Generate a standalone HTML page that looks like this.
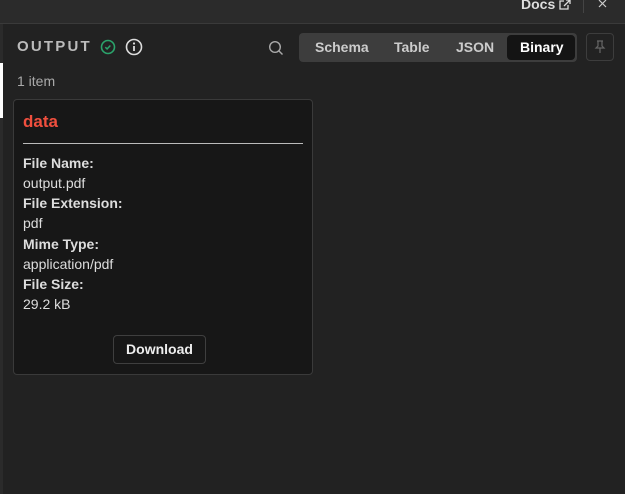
<!DOCTYPE html>
<html><head><style>
body{margin:0;width:625px;height:494px;background:#222;font-family:"Liberation Sans",Arial,sans-serif;position:relative;overflow:hidden;color:#ddd}
.top{position:absolute;left:0;top:0;width:625px;height:23px;background:#2b2b2b;border-bottom:1px solid #3a3a3a}
.abs{position:absolute}
.card{position:absolute;left:13px;top:99px;width:298px;height:274px;background:#171717;border:1px solid #3a3a3a;border-radius:4px}
.lbl{font-weight:bold;font-size:14px;color:#ddd}
.val{font-size:14px;color:#ddd}
</style></head><body>
<div class="top"></div>
<div class="abs" style="left:521px;top:-4px;font-size:14px;font-weight:bold;color:#ddd">Docs</div>
<svg class="abs" style="left:558px;top:0" width="13" height="10" viewBox="0 0 13 10"><path d="M6 1H2v8h8V5M8 0h4v4M12 0L6 6" stroke="#ddd" stroke-width="1.3" fill="none"/></svg>
<div class="abs" style="left:583px;top:0;width:1px;height:13px;background:#444"></div>
<svg class="abs" style="left:598px;top:0" width="10" height="8"><path d="M1 0l7 7M8 0L1 7" stroke="#ccc" stroke-width="1.2"/></svg>
<div class="abs" style="left:0;top:24px;width:3px;height:470px;background:#2b2b2b"></div>
<div class="abs" style="left:0;top:63px;width:3px;height:55px;background:#fff"></div>
<div class="abs" style="left:17px;top:38px;font-size:15px;font-weight:bold;letter-spacing:2.2px;color:#bbb">OUTPUT</div>
<svg class="abs" style="left:100px;top:39px" width="16" height="16"><circle cx="8" cy="8" r="6.5" stroke="#2ba36b" stroke-width="1.6" fill="none"/><path d="M5.3 8.2l1.8 1.7 3.3-3.4" stroke="#2ba36b" stroke-width="1.5" fill="none"/></svg>
<svg class="abs" style="left:125px;top:38px" width="18" height="18"><circle cx="9" cy="9" r="7.5" stroke="#ddd" stroke-width="1.6" fill="none"/><path d="M9 8v5" stroke="#ddd" stroke-width="1.8"/><circle cx="9" cy="5.5" r="1.1" fill="#ddd"/></svg>
<svg class="abs" style="left:268px;top:40px" width="16" height="16"><circle cx="7" cy="7" r="5.3" stroke="#aaa" stroke-width="1.4" fill="none"/><path d="M11 11l3.5 3.5" stroke="#aaa" stroke-width="1.4"/></svg>
<div class="abs" style="left:299px;top:33px;width:278px;height:29px;background:#3d3d3d;border-radius:4px"></div>
<div class="abs" style="left:507px;top:35px;width:68px;height:25px;background:#141414;border-radius:4px"></div>
<div class="abs" style="left:315px;top:39px;font-size:14px;font-weight:bold;color:#ccc">Schema</div>
<div class="abs" style="left:394px;top:39px;font-size:14px;font-weight:bold;color:#ccc">Table</div>
<div class="abs" style="left:456px;top:39px;font-size:14px;font-weight:bold;color:#ccc">JSON</div>
<div class="abs" style="left:520px;top:39px;font-size:14px;font-weight:bold;color:#fff">Binary</div>
<div class="abs" style="left:586px;top:33px;width:28px;height:28px;border:1px solid #3d3d3d;border-radius:4px;box-sizing:border-box"></div>
<svg class="abs" style="left:594px;top:40px" width="12" height="14"><path d="M3 1h6M4 1v5L2 8h8L8 6V1M6 8v5" stroke="#666" stroke-width="1.2" fill="none"/></svg>
<div class="abs" style="left:17px;top:73px;font-size:14px;color:#aaa">1 item</div>
<div class="card"></div>
<div class="abs" style="left:23px;top:112px;font-size:17px;font-weight:bold;color:#f04f3e">data</div>
<div class="abs" style="left:23px;top:143px;width:280px;height:1px;background:#bbb"></div>
<div class="abs lbl" style="left:23px;top:155px">File Name:</div>
<div class="abs val" style="left:23px;top:175px">output.pdf</div>
<div class="abs lbl" style="left:23px;top:195px">File Extension:</div>
<div class="abs val" style="left:23px;top:215px">pdf</div>
<div class="abs lbl" style="left:23px;top:236px">Mime Type:</div>
<div class="abs val" style="left:23px;top:256px">application/pdf</div>
<div class="abs lbl" style="left:23px;top:276px">File Size:</div>
<div class="abs val" style="left:23px;top:296px">29.2 kB</div>
<div class="abs" style="left:113px;top:335px;width:93px;height:29px;border:1px solid #3f3f3f;border-radius:4px;box-sizing:border-box;text-align:center;line-height:27px;font-size:14px;font-weight:bold;color:#eee">Download</div>
</body></html>
